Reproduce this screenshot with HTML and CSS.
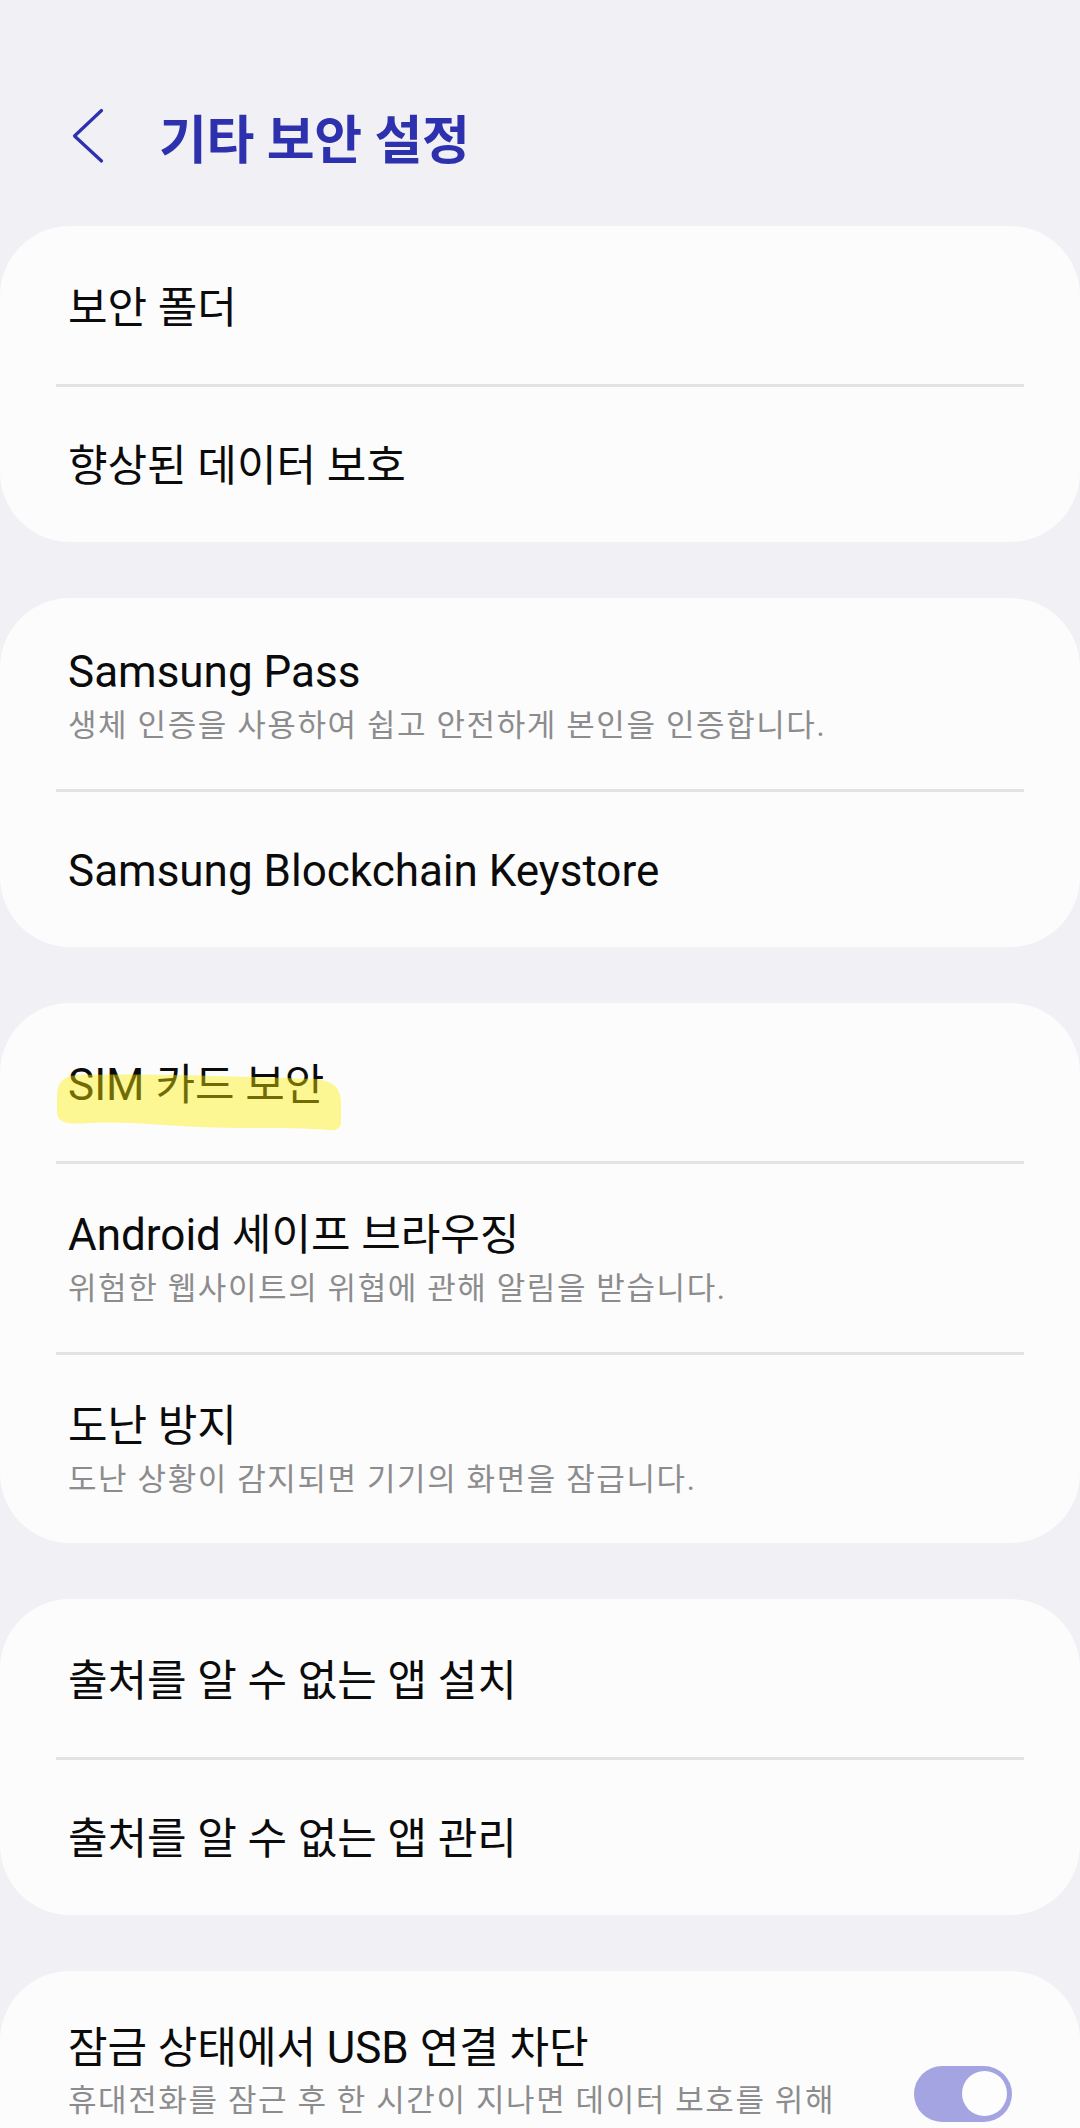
FILE: index.html
```html
<!DOCTYPE html>
<html lang="ko">
<head>
<meta charset="utf-8">
<title>기타 보안 설정</title>
<link rel="stylesheet" href="styles.css">
</head>
<body>
<div class="screen">
  <header class="appbar">
    <svg class="back" width="32" height="56" viewBox="0 0 32 56" aria-hidden="true">
      <path d="M29.5 2.5 L2.5 28 L29.5 53" fill="none" stroke="#2e31ad" stroke-width="3.2" stroke-linecap="round" stroke-linejoin="round"/>
    </svg>
    <h1 class="page-title">기타 보안 설정</h1>
  </header>

  <section class="card">
    <div class="row"><div class="text"><div class="title"><span class="ko">보안 폴더</span></div></div></div>
    <div class="row"><div class="text"><div class="title"><span class="ko">향상된 데이터 보호</span></div></div></div>
  </section>

  <section class="card">
    <div class="row two"><div class="text"><div class="title">Samsung Pass</div><div class="sub">생체 인증을 사용하여 쉽고 안전하게 본인을 인증합니다.</div></div></div>
    <div class="row"><div class="text"><div class="title">Samsung Blockchain Keystore</div></div></div>
  </section>

  <section class="card">
    <div class="row marked">
      <div class="text"><div class="title">SIM <span class="ko">카드 보안</span></div></div>
      <svg class="marker" width="300" height="140" viewBox="0 0 300 140" aria-hidden="true">
        <path d="M1 95 C1 80 6 73 22 72 C94 70 194 74 259 76 C279 78 285 86 285 100 L285 118 C285 126 280 128 272 127 C234 124 184 126 144 124 C104 122 64 118 34 120 C16 121 2 122 1 110 Z" fill="rgba(252,240,0,0.42)"/>
      </svg>
    </div>
    <div class="row two"><div class="text"><div class="title">Android <span class="ko">세이프 브라우징</span></div><div class="sub">위험한 웹사이트의 위협에 관해 알림을 받습니다.</div></div></div>
    <div class="row two"><div class="text"><div class="title"><span class="ko">도난 방지</span></div><div class="sub">도난 상황이 감지되면 기기의 화면을 잠급니다.</div></div></div>
  </section>

  <section class="card">
    <div class="row"><div class="text"><div class="title"><span class="ko">출처를 알 수 없는 앱 설치</span></div></div></div>
    <div class="row"><div class="text"><div class="title"><span class="ko">출처를 알 수 없는 앱 관리</span></div></div></div>
  </section>

  <section class="card">
    <div class="row two usb">
      <div class="text narrow"><div class="title"><span class="ko">잠금 상태에서 </span>USB <span class="ko">연결 차단</span></div><div class="sub">휴대전화를 잠근 후 한 시간이 지나면 데이터 보호를 위해 USB 연결이 차단됩니다.</div></div>
      <div class="switch"><span class="thumb"></span></div>
    </div>
  </section>
</div>
</body>
</html>
```
FILE: styles.css
```css
html, body {
  margin: 0;
  padding: 0;
}

body {
  background: #f0f0f5;
  width: 1080px;
  height: 2128px;
  overflow: hidden;
  font-family: Roboto, "Noto Sans CJK KR", sans-serif;
}

.screen {
  width: 1080px;
}

.appbar {
  height: 226px;
  box-sizing: border-box;
  display: flex;
  align-items: flex-start;
  padding: 108px 0 0 72px;
}

.back {
  display: block;
  flex: none;
}

.page-title {
  margin: 2px 0 0 55px;
  font-size: 52px;
  line-height: 64px;
  font-weight: 700;
  color: #2e31ad;
  letter-spacing: -0.3px;
}

.card {
  background: #fcfcfc;
  border-radius: 70px;
  margin-bottom: 56px;
}

.row {
  position: relative;
  display: flex;
  align-items: center;
  margin: 0 56px;
  padding: 54px 12px 48px;
}

.row.two {
  padding-top: 46px;
  padding-bottom: 43px;
}

.row.usb {
  padding-top: 49px;
  padding-bottom: 38px;
}

.row + .row {
  border-top: 3px solid #e3e3e6;
  padding-top: 51px;
}

.row + .row.two {
  padding-top: 43px;
}

.text {
  flex: 1;
  min-width: 0;
}

.text.narrow {
  flex: none;
  width: 830px;
}

.title {
  font-size: 44px;
  line-height: 56px;
  height: 56px;
  color: #0b0b0b;
  white-space: nowrap;
}

.ko {
  font-size: 43px;
  line-height: 40px;
}

.sub {
  margin-top: 6px;
  font-size: 31px;
  line-height: 40px;
  letter-spacing: 1.6px;
  color: #8c8c8e;
}

.usb .sub {
  margin-top: 3px;
  line-height: 44px;
}

.marker {
  position: absolute;
  left: 0;
  top: 0;
  pointer-events: none;
}

.switch {
  flex: none;
  margin-left: auto;
  width: 98px;
  height: 56px;
  box-sizing: border-box;
  border-radius: 28px;
  background: #a4a4e2;
  display: flex;
  align-items: center;
  justify-content: flex-end;
  padding: 0 5px;
}

.thumb {
  display: block;
  width: 45px;
  height: 45px;
  border-radius: 50%;
  background: #fdfdfd;
}
```
